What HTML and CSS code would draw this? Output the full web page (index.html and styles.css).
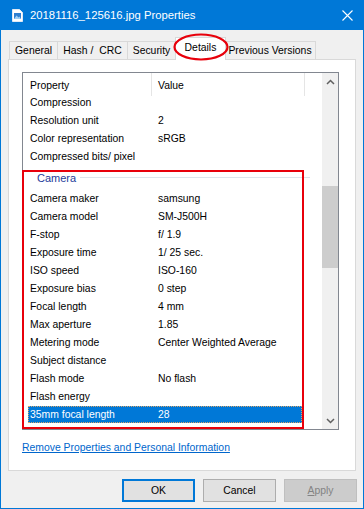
FILE: index.html
```html
<!DOCTYPE html>
<html>
<head>
    <title>20181116_125616.jpg Properties</title>
    <link rel="stylesheet" href="styles.css">
</head>
<body>
    <div class="titlebar">
        <svg class="file-icon" width="11" height="13" viewBox="0 0 11 13">
            <path d="M0.5 0.5 H7.5 L10.5 3.5 V12.5 H0.5 Z" fill="#fff" stroke="#dfe9f5"/>
            <rect x="2" y="4" width="7" height="6" fill="#2f7fd0"/>
            <path d="M2 10 L4.5 6.5 L6.5 8.5 L7.5 7.5 L9 10 Z" fill="#9fd0f5"/>
        </svg>
        <span class="title">20181116_125616.jpg Properties</span>
        <svg class="close" width="11" height="11" viewBox="0 0 11 11">
            <path d="M0.5 0.5 L10.5 10.5 M10.5 0.5 L0.5 10.5" stroke="#fff" stroke-width="1.1"/>
        </svg>
    </div>

    <div class="tabs">
        <div class="tab tab-general">General</div>
        <div class="tab tab-hash">Hash / &nbsp;CRC</div>
        <div class="tab tab-security">Security</div>
        <div class="tab tab-details active">Details</div>
        <div class="tab tab-prev">Previous Versions</div>
    </div>

    <div class="panel">
        <div class="listbox">
            <div class="list">
                <div class="list-head">
                    <div class="head-cell head-name">Property</div>
                    <div class="head-cell head-value">Value</div>
                </div>
                <div class="row"><span class="name">Compression</span><span class="value"></span></div>
                <div class="row"><span class="name">Resolution unit</span><span class="value">2</span></div>
                <div class="row"><span class="name">Color representation</span><span class="value">sRGB</span></div>
                <div class="row"><span class="name">Compressed bits/ pixel</span><span class="value"></span></div>
                <div class="group"><span class="group-label">Camera</span><span class="group-line"></span></div>
                <div class="row"><span class="name">Camera maker</span><span class="value">samsung</span></div>
                <div class="row"><span class="name">Camera model</span><span class="value">SM-J500H</span></div>
                <div class="row"><span class="name">F-stop</span><span class="value">f/ 1.9</span></div>
                <div class="row"><span class="name">Exposure time</span><span class="value">1/ 25 sec.</span></div>
                <div class="row"><span class="name">ISO speed</span><span class="value">ISO-160</span></div>
                <div class="row"><span class="name">Exposure bias</span><span class="value">0 step</span></div>
                <div class="row"><span class="name">Focal length</span><span class="value">4 mm</span></div>
                <div class="row"><span class="name">Max aperture</span><span class="value">1.85</span></div>
                <div class="row"><span class="name">Metering mode</span><span class="value">Center Weighted Average</span></div>
                <div class="row"><span class="name">Subject distance</span><span class="value"></span></div>
                <div class="row"><span class="name">Flash mode</span><span class="value">No flash</span></div>
                <div class="row"><span class="name">Flash energy</span><span class="value"></span></div>
                <div class="row selected"><span class="name">35mm focal length</span><span class="value">28</span></div>
            </div>
            <div class="scrollbar">
                <div class="arrow">
                    <svg width="9" height="6" viewBox="0 0 9 6"><path d="M1 5 L4.5 1.5 L8 5" fill="none" stroke="#606060" stroke-width="1.5"/></svg>
                </div>
                <div class="track"><div class="thumb"></div></div>
                <div class="arrow">
                    <svg width="9" height="6" viewBox="0 0 9 6"><path d="M1 1 L4.5 4.5 L8 1" fill="none" stroke="#606060" stroke-width="1.5"/></svg>
                </div>
            </div>
        </div>
        <a class="link" href="#">Remove Properties and Personal Information</a>
    </div>

    <div class="buttons">
        <button class="btn default">OK</button>
        <button class="btn">Cancel</button>
        <button class="btn disabled"><u>A</u>pply</button>
    </div>

    <!-- red annotation marks -->
    <svg class="mark-tab" width="58" height="30" viewBox="0 0 58 30">
        <ellipse cx="29" cy="15" rx="26.5" ry="12.5" fill="none" stroke="#e8000b" stroke-width="2.2"/>
    </svg>
    <div class="mark-box"></div>
</body>
</html>
```

FILE: styles.css
```css
* { box-sizing: border-box; margin: 0; padding: 0; }
html, body { width: 364px; height: 509px; }
body { position: relative; background: #f0f0f0; border: 1px solid #0078d7; border-top: 0; font-family: "Liberation Sans", Arial, sans-serif; font-size: 10.4px; color: #000; overflow: hidden; }

.titlebar { height: 30px; background: #0078d7; display: flex; align-items: center; padding-left: 11px; color: #fff; }
.file-icon { margin-right: 7px; margin-top: 1px; }
.title { font-size: 11.3px; flex: 1; }
.close { margin-right: 10px; margin-top: 1px; }

.tabs { height: 29px; display: flex; align-items: flex-end; padding-left: 8px; position: relative; z-index: 1; }
.tab { height: 18px; line-height: 17px; border: 1px solid #d9d9d9; border-bottom: 0; margin-left: -1px; text-align: center; background: #f0f0f0; white-space: nowrap; }
.tab:first-child { margin-left: 0; }
.tab-general { width: 49px; }
.tab-hash { width: 71px; }
.tab-security { width: 49px; }
.tab-details { width: 51px; }
.tab-prev { width: 92px; }
.tab.active { height: 23px; margin-bottom: -1px; background: #fff; line-height: 19px; position: relative; z-index: 2; margin-right: -1px; }

.panel { margin: 0 7px; height: 412px; background: #fff; border: 1px solid #d9d9d9; padding: 12px 0 0 13px; }

.listbox { width: 317px; height: 358px; border: 1px solid #828790; display: flex; }
.list { width: 299px; }
.list-head { display: flex; height: 21px; }
.head-cell { padding-left: 7px; line-height: 16px; padding-top: 5px; position: relative; }
.head-cell::after { content: ""; position: absolute; right: 0; top: 0; width: 1px; height: 23px; background: #e5e5e5; }
.head-name { width: 129px; }
.head-value { width: 153px; padding-left: 6px; }

.row { display: flex; height: 18px; line-height: 18px; margin-left: 5px; width: 274px; padding-left: 2px; white-space: nowrap; }
.name { width: 128px; }
.value { flex: 1; }
.row.selected { height: 17px; line-height: 15px; background: #0078d7; color: #fff; border: 1px dotted #d8a46a; padding-left: 1px; }

.group { height: 24px; display: flex; align-items: center; padding-left: 14px; }
.group-label { color: #1e3c9a; font-size: 11px; margin-right: 4px; }
.group-line { width: 230px; height: 1px; background: #dde4ec; margin-top: -1px; }

.scrollbar { width: 16px; background: #f0f0f0; display: flex; flex-direction: column; }
.arrow { height: 17px; display: flex; align-items: center; justify-content: center; }
.track { flex: 1; position: relative; }
.thumb { position: absolute; left: 0; right: 0; top: 96px; height: 82px; background: #cdcdcd; }

.link { display: inline-block; margin-top: 12px; color: #0066cc; text-decoration: underline; font-size: 10.4px; }

.buttons { display: flex; justify-content: flex-end; gap: 8px; padding: 8px 6px 0 0; }
.btn { width: 73px; height: 23px; background: #e1e1e1; border: 1px solid #adadad; font-family: "Liberation Sans", Arial, sans-serif; font-size: 10.4px; color: #000; }
.btn.default { border: 2px solid #0078d7; }
.btn.disabled { background: #cccccc; border-color: #bfbfbf; color: #838383; }

.mark-tab { position: absolute; left: 171px; top: 32px; z-index: 5; }
.mark-box { position: absolute; left: 21px; top: 170px; width: 282px; height: 259px; border: 2px solid #e8000b; z-index: 5; }
```
